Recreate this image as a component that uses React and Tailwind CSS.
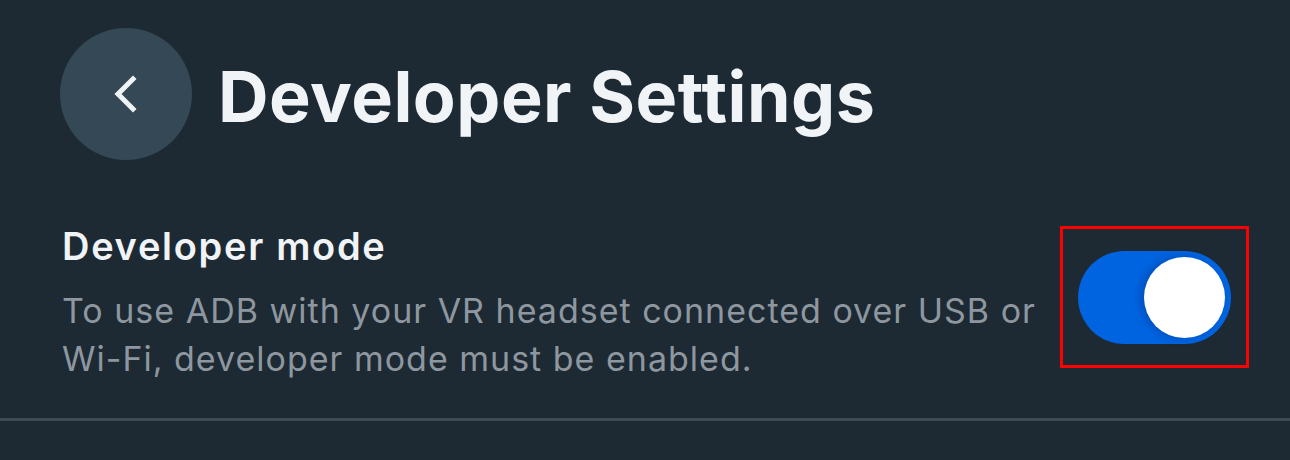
export default function App() {
  return (
    <div className="h-[460px] w-[1290px] overflow-hidden bg-[#1d2a34] font-['Inter',sans-serif]">
      {/* Header */}
      <div className="flex h-[188px] items-center pl-[60px]">
        <button className="flex h-[132px] w-[132px] items-center justify-center rounded-full bg-[#344955]">
          <svg width="28" height="38" viewBox="0 0 28 38" fill="none">
            <path d="M21 4 L6 19 L21 34" stroke="#f1f4f7" strokeWidth="5" strokeLinecap="square" strokeLinejoin="miter" />
          </svg>
        </button>
        <h1 className="ml-[26px] pt-[5px] text-[70px] font-bold leading-none tracking-[0.5px] text-[#f1f4f7]">Developer Settings</h1>
      </div>

      {/* Row */}
      <div className="flex items-start justify-between border-b-[3px] border-[#3d4b56] pb-[35px] pl-[62px] pr-[41px]">
        <div className="pt-[36px]">
          <div className="text-[38px] font-semibold leading-[44px] tracking-[1.7px] text-[#f1f4f7]">Developer mode</div>
          <p className="mt-[19px] w-[985px] text-[34px] leading-[48px] tracking-[1px] text-[#8e979f]">
            To use ADB with your VR headset connected over USB or Wi-Fi, developer mode must be enabled.
          </p>
        </div>
        <div className="mt-[38px] flex h-[142px] w-[189px] shrink-0 items-center justify-center border-[3px] border-[#ff0000]">
          <div className="flex h-[93px] w-[153px] items-center justify-end rounded-full bg-[#0064e0] pr-[6px]">
            <div className="h-[81px] w-[81px] rounded-full bg-white shadow-[-4px_0_8px_rgba(0,40,120,0.35)]" />
          </div>
        </div>
      </div>
    </div>
  );
}
